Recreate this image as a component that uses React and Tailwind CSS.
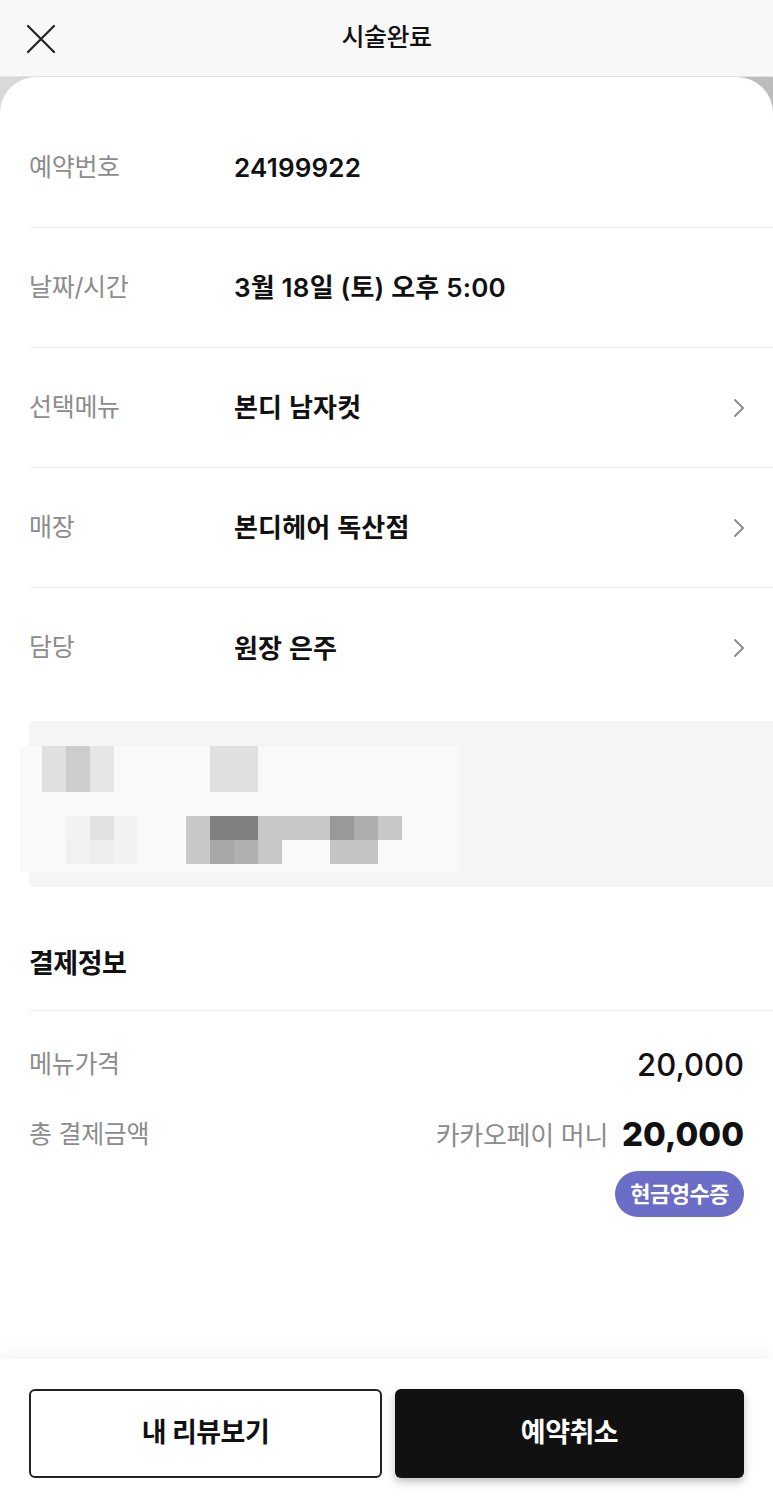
import React from "react";

const font = { fontFamily: '"Inter", "Noto Sans CJK KR", sans-serif' };

const rows = [
  { label: "예약번호", value: "24199922" },
  { label: "날짜/시간", value: "3월 18일 (토) 오후 5:00" },
  { label: "선택메뉴", value: "본디 남자컷", link: true },
  { label: "매장", value: "본디헤어 독산점", link: true },
  { label: "담당", value: "원장 은주", link: true, last: true },
];

// blurred photo mosaic, positions relative to the grey box
const mosaic = [
  "left-[13px] top-[25px] w-[24px] h-[46px] bg-[#e0e0e0]",
  "left-[37px] top-[25px] w-[24px] h-[46px] bg-[#cdcdcd]",
  "left-[61px] top-[25px] w-[24px] h-[46px] bg-[#e6e6e6]",
  "left-[181px] top-[25px] w-[48px] h-[46px] bg-[#e0e0e0]",
  "left-[37px] top-[95px] w-[24px] h-[24px] bg-[#f2f2f2]",
  "left-[61px] top-[95px] w-[24px] h-[24px] bg-[#e2e2e2]",
  "left-[85px] top-[95px] w-[24px] h-[24px] bg-[#f2f2f2]",
  "left-[157px] top-[95px] w-[24px] h-[48px] bg-[#c8c8c8]",
  "left-[181px] top-[95px] w-[48px] h-[24px] bg-[#808080]",
  "left-[229px] top-[95px] w-[72px] h-[24px] bg-[#c8c8c8]",
  "left-[301px] top-[95px] w-[24px] h-[24px] bg-[#999999]",
  "left-[325px] top-[95px] w-[24px] h-[24px] bg-[#adadad]",
  "left-[349px] top-[95px] w-[24px] h-[24px] bg-[#c8c8c8]",
  "left-[37px] top-[119px] w-[24px] h-[24px] bg-[#f1f1f1]",
  "left-[61px] top-[119px] w-[24px] h-[24px] bg-[#eeeeee]",
  "left-[85px] top-[119px] w-[24px] h-[24px] bg-[#f2f2f2]",
  "left-[181px] top-[119px] w-[24px] h-[24px] bg-[#a7a7a7]",
  "left-[205px] top-[119px] w-[24px] h-[24px] bg-[#afafaf]",
  "left-[229px] top-[119px] w-[24px] h-[24px] bg-[#c8c8c8]",
  "left-[301px] top-[119px] w-[48px] h-[24px] bg-[#c4c4c4]",
];

const Chevron = () => (
  <svg width="12" height="20" viewBox="0 0 12 20" fill="none">
    <path d="M2 2 L10 10 L2 18" stroke="#8a8a8a" strokeWidth="1.8" strokeLinecap="round" strokeLinejoin="round" />
  </svg>
);

export default function App() {
  return (
    <div className="min-h-screen flex flex-col bg-white text-[#111]" style={font}>
      {/* header */}
      <div className="h-[77px] bg-[#f8f8f8] border-b border-[#e2e2e2] relative flex items-center justify-center">
        <button className="absolute left-[26px] top-[24px]">
          <svg width="30" height="30" viewBox="0 0 30 30" fill="none">
            <path d="M2 2 L28 28 M28 2 L2 28" stroke="#222" strokeWidth="2.2" strokeLinecap="round" />
          </svg>
        </button>
        <h1 className="text-[25px] font-medium tracking-[-0.5px]">시술완료</h1>
      </div>

      <div className="flex-1 flex flex-col bg-gradient-to-r from-[#d9d9d9] to-[#bcbcbc]">
        <div className="flex-1 flex flex-col bg-white rounded-t-[36px]">
          {/* reservation info */}
          <div className="pt-[31px] pl-[29px]">
            {rows.map((r) => (
              <div
                key={r.label}
                className={`h-[120px] flex items-center ${r.last ? "" : "border-b border-[#ededed]"}`}
              >
                <span className="w-[205px] text-[25px] text-[#8c8c8c] tracking-[-0.3px]">{r.label}</span>
                <span className="flex-1 text-[26px] font-semibold tracking-[0.2px]">{r.value}</span>
                {r.link && (
                  <span className="pr-[28px] flex items-center">
                    <Chevron />
                  </span>
                )}
              </div>
            ))}
          </div>

          {/* blurred photo box */}
          <div className="mt-[13px] ml-[29px] h-[166px] bg-[#f5f5f5] rounded-l-[6px] relative">
            <div className="absolute left-[-9px] top-[25px] w-[440px] h-[126px] bg-[#f9f9f9]" />
            {mosaic.map((c, i) => (
              <div key={i} className={`absolute ${c}`} />
            ))}
          </div>

          {/* payment */}
          <div className="pt-[54px] px-[29px]">
            <div className="h-[46px] flex items-center">
              <h2 className="text-[27px] font-bold tracking-[-0.5px]">결제정보</h2>
            </div>
            <div className="mt-[23px] border-t border-[#ededed] mr-[-29px]" />
            <div className="mt-[34px] h-[40px] flex items-center justify-between">
              <span className="text-[25px] text-[#8c8c8c] tracking-[-0.3px]">메뉴가격</span>
              <span className="text-[31px] font-medium">20,000</span>
            </div>
            <div className="mt-[30px] h-[40px] flex items-center justify-between">
              <span className="text-[25px] text-[#8c8c8c] tracking-[-0.3px]">총 결제금액</span>
              <div className="flex items-center gap-[14px]">
                <span className="text-[26px] text-[#8c8c8c] tracking-[-0.3px]">카카오페이 머니</span>
                <span className="text-[33px] font-extrabold">20,000</span>
              </div>
            </div>
            <div className="mt-[16px] flex justify-end">
              <span className="h-[46px] px-[15px] rounded-full bg-[#6a6ec7] text-white text-[22px] font-bold flex items-center tracking-[-0.5px]">
                현금영수증
              </span>
            </div>
          </div>

          <div className="flex-1" />

          {/* bottom bar */}
          <div className="bg-white shadow-[0_-8px_16px_rgba(0,0,0,0.04)] pt-[30px] pb-[29px] px-[29px] flex gap-[13px]">
            <button className="flex-1 h-[89px] rounded-[6px] border-2 border-[#222] bg-white text-[27px] font-bold tracking-[-0.5px]">
              내 리뷰보기
            </button>
            <button className="flex-1 h-[89px] rounded-[6px] bg-[#111] text-white text-[27px] font-bold tracking-[-0.5px] shadow-[0_4px_8px_rgba(0,0,0,0.25)]">
              예약취소
            </button>
          </div>
        </div>
      </div>
    </div>
  );
}
